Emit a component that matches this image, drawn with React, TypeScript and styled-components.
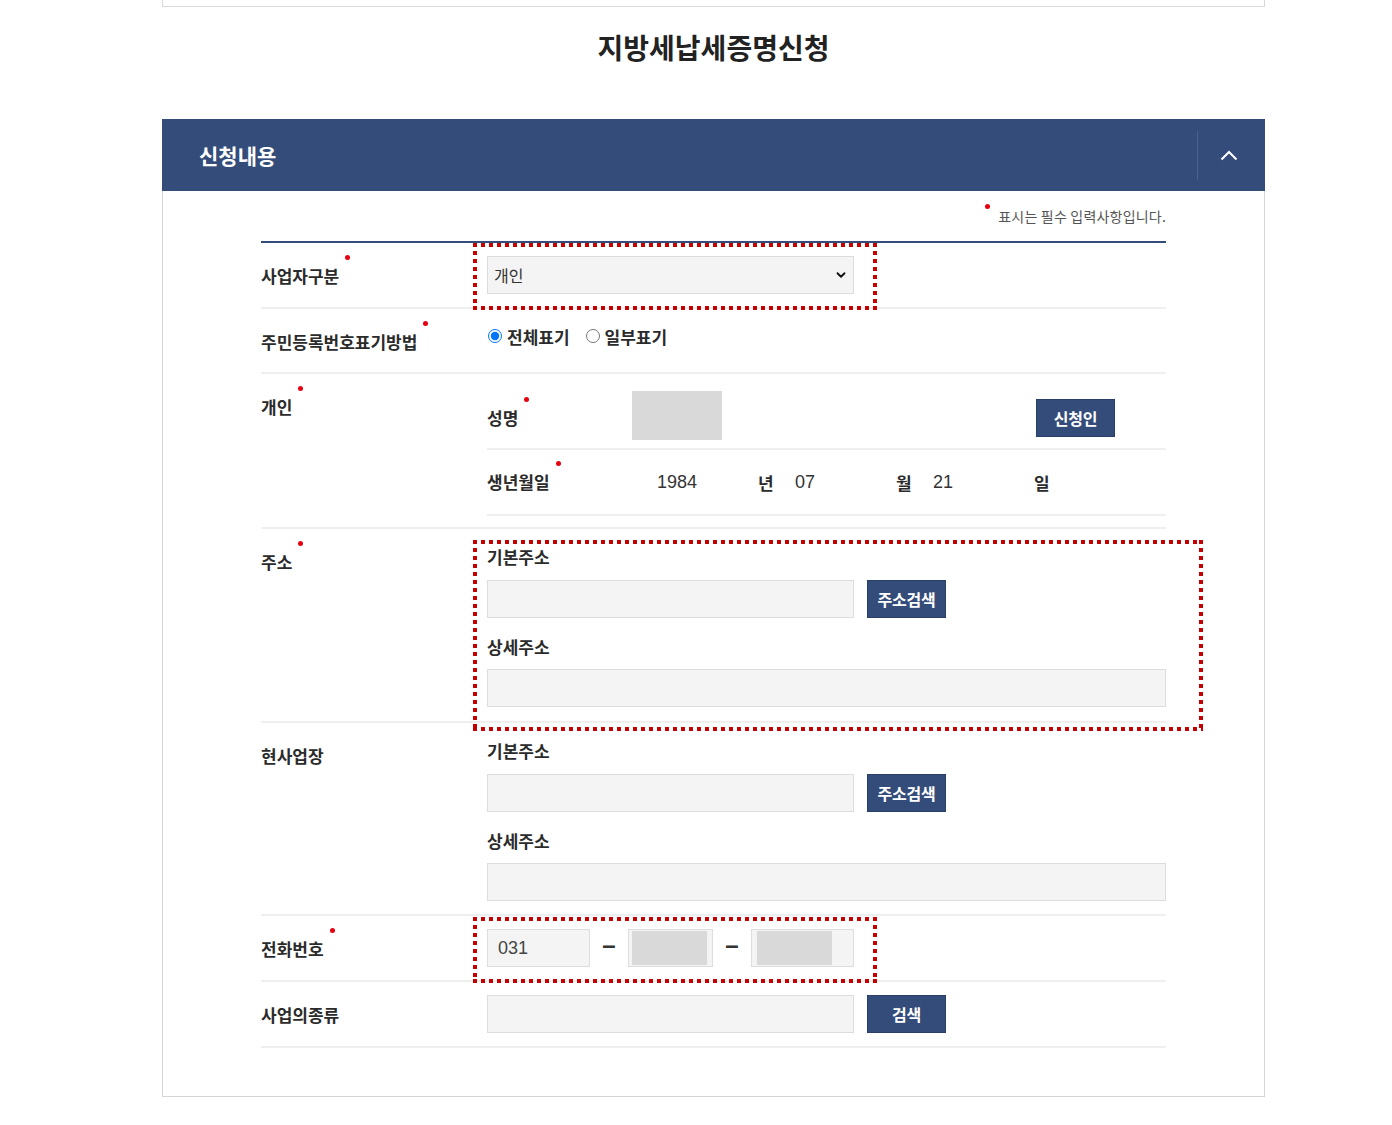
import React from 'react';
import styled, { createGlobalStyle } from 'styled-components';
import { ChevronDown } from 'lucide-react';

const GlobalStyle = createGlobalStyle`
  html, body {
    margin: 0;
    padding: 0;
    background: #fff;
  }
  body {
    font-family: "Noto Sans CJK KR", "Noto Sans", sans-serif;
    color: #2b2b2b;
  }
  * {
    box-sizing: border-box;
  }
`;

const NAVY = '#344c79';

const Page = styled.div`
  width: 1103px;
  margin-left: 162px;
`;

const TopCardEdge = styled.div`
  height: 7px;
  border: 1px solid #d9d9d9;
  border-top: none;
`;

const PageTitle = styled.h1`
  margin: 22px 0 54px;
  text-align: center;
  font-size: 28px;
  font-weight: 700;
  letter-spacing: 0;
  line-height: 36px;
  color: #222;
`;

const PanelHeader = styled.div`
  height: 72px;
  background: ${NAVY};
  display: flex;
  align-items: center;
`;

const PanelTitle = styled.h2`
  flex: 1;
  margin: 0;
  padding-left: 37px;
  font-size: 21px;
  font-weight: 700;
  letter-spacing: 0;
  color: #fff;
`;

const ToggleButton = styled.button`
  width: 68px;
  height: 49px;
  border: none;
  border-left: 1px solid #4b6090;
  background: transparent;
  display: flex;
  align-items: center;
  justify-content: center;
  padding: 0 6px 0 0;
  cursor: pointer;
`;

const PanelBody = styled.div`
  border: 1px solid #d5d5d5;
  border-top: none;
  padding: 15px 98px 48px;
`;

const Note = styled.p`
  margin: 0 0 15px;
  display: flex;
  justify-content: flex-end;
  align-items: flex-start;
  font-size: 14px;
  line-height: 20px;
  letter-spacing: 0.2px;
  color: #555;
`;

const NoteDot = styled.span`
  width: 5px;
  height: 5px;
  margin: -2px 8px 0 0;
  border-radius: 50%;
  background: #e60012;
`;

const FormTable = styled.div`
  border-top: 2px solid ${NAVY};
`;

const Row = styled.div`
  display: grid;
  grid-template-columns: 226px 1fr;
  border-bottom: 2px solid #efefef;
`;

const LabelCell = styled.div<{ $bottom?: number }>`
  padding: 14px 0 ${({ $bottom }) => $bottom ?? 12}px;
`;

const Label = styled.span`
  display: inline-flex;
  align-items: flex-start;
  font-size: 17px;
  font-weight: 700;
  letter-spacing: 0;
  line-height: 38px;
  color: #2b2b2b;
`;

const RequiredDot = styled.span`
  width: 5px;
  height: 5px;
  margin: -2px 0 0 6px;
  border-radius: 50%;
  background: #e60012;
`;

const ValueCell = styled.div<{ $pad: string }>`
  position: relative;
  padding: ${({ $pad }) => $pad};
`;

const Annotated = styled.div<{ $width: number }>`
  position: relative;
  width: ${({ $width }) => $width}px;
`;

// red dotted marking laid over the screenshot
const RedMark = styled.div<{ $t: number; $l: number; $r: number; $b: number }>`
  position: absolute;
  top: ${({ $t }) => $t}px;
  left: ${({ $l }) => $l}px;
  right: ${({ $r }) => $r}px;
  bottom: ${({ $b }) => $b}px;
  pointer-events: none;
  background:
    repeating-linear-gradient(90deg, #c40000 0 4px, transparent 4px 8px) top left / 100% 4px no-repeat,
    repeating-linear-gradient(90deg, #c40000 0 4px, transparent 4px 8px) bottom left / 100% 4px no-repeat,
    repeating-linear-gradient(180deg, #c40000 0 4px, transparent 4px 8px) top left / 4px 100% no-repeat,
    repeating-linear-gradient(180deg, #c40000 0 4px, transparent 4px 8px) top right / 4px 100% no-repeat;
`;

const Select = styled.select`
  width: 100%;
  height: 38px;
  appearance: none;
  background: #f4f4f4;
  border: 1px solid #dcdcdc;
  border-radius: 0;
  padding: 0 30px 0 6px;
  font-family: "Noto Sans CJK KR", sans-serif;
  font-size: 16px;
  color: #333;
  outline: none;
`;

const SelectIcon = styled.span`
  position: absolute;
  right: 6px;
  top: 12px;
  display: flex;
  pointer-events: none;
  color: #111;
`;

const RadioGroup = styled.div`
  display: flex;
  align-items: center;
  gap: 15px;
  height: 26px;
`;

const RadioLabel = styled.label`
  display: flex;
  align-items: center;
  gap: 5px;
  font-size: 17px;
  font-weight: 700;
  letter-spacing: 0;
  color: #2b2b2b;

  input {
    margin: 0 0 0 1px;
    width: 14px;
    height: 14px;
  }
`;

const SubRow = styled.div<{ $pad: string }>`
  display: flex;
  align-items: center;
  padding: ${({ $pad }) => $pad};
  border-bottom: 2px solid #efefef;
`;

const SubLabel = styled(Label)<{ $shift?: number }>`
  width: 145px;
  margin-top: ${({ $shift }) => $shift ?? 0}px;
`;

const NameMask = styled.div`
  width: 90px;
  height: 49px;
  background: #d9d9d9;
`;

const Spacer = styled.div`
  flex: 1;
`;

const Button = styled.button<{ $gap?: number; $shift?: number }>`
  width: 79px;
  height: 38px;
  margin: ${({ $shift }) => $shift ?? 0}px ${({ $gap }) => $gap ?? 0}px 0 0;
  background: ${NAVY};
  border: 1px solid #2a3f68;
  color: #fff;
  font-family: "Noto Sans CJK KR", sans-serif;
  font-size: 16px;
  font-weight: 700;
  letter-spacing: -0.2px;
  cursor: pointer;
`;

const DateLine = styled.div`
  display: flex;
  align-items: center;
  padding-left: 25px;
`;

const DateValue = styled.span`
  width: 101px;
  font-family: "Liberation Sans", Arial, sans-serif;
  font-size: 18px;
  color: #333;
`;

const DateUnit = styled.span`
  width: 37px;
  font-size: 17px;
  font-weight: 700;
  color: #2b2b2b;
`;

const AddressBlock = styled.div`
  display: flex;
  flex-direction: column;
`;

const FieldTitle = styled.div<{ $top?: number; $bottom: number }>`
  margin: ${({ $top }) => $top ?? 0}px 0 ${({ $bottom }) => $bottom}px;
  font-size: 17px;
  font-weight: 700;
  letter-spacing: 0;
  line-height: 22px;
  color: #2b2b2b;
`;

const InputLine = styled.div`
  display: flex;
  gap: 13px;
`;

const TextInput = styled.input<{ $width: number }>`
  width: ${({ $width }) => $width}px;
  height: 38px;
  background: #f4f4f4;
  border: 1px solid #dddddd;
  border-radius: 0;
  padding: 0 10px;
  font-size: 16px;
  outline: none;
`;

const PhoneGroup = styled.div`
  display: flex;
  align-items: center;
`;

const PhoneBox = styled.div<{ $width: number; $text?: boolean }>`
  width: ${({ $width }) => $width}px;
  height: 38px;
  background: #f4f4f4;
  border: 1px solid #dddddd;
  display: flex;
  align-items: center;
  padding-left: ${({ $text }) => ($text ? 10 : 0)}px;
  font-family: "Liberation Sans", Arial, sans-serif;
  font-size: 18px;
  color: #444;
`;

const Redact = styled.div<{ $left: number }>`
  width: 75px;
  height: 34px;
  margin-left: ${({ $left }) => $left}px;
  background: #d9d9d9;
`;

const Dash = styled.span`
  width: 38px;
  text-align: center;
  font-family: "Liberation Sans", Arial, sans-serif;
  font-size: 24px;
  font-weight: 700;
  line-height: 1;
  margin-top: -6px;
  color: #333;
`;

const ChevronUp = () => (
  <svg width="18" height="11" viewBox="0 0 18 11" fill="none">
    <polyline points="1.5,9.5 9,2 16.5,9.5" stroke="#fff" strokeWidth="2" />
  </svg>
);

const Address: React.FC = () => (
  <AddressBlock>
    <FieldTitle $bottom={12}>기본주소</FieldTitle>
    <InputLine>
      <TextInput $width={367} />
      <Button>주소검색</Button>
    </InputLine>
    <FieldTitle $top={18} $bottom={11}>상세주소</FieldTitle>
    <TextInput $width={679} />
  </AddressBlock>
);

export default function App() {
  return (
    <>
      <GlobalStyle />
      <Page>
        <TopCardEdge />
        <PageTitle>지방세납세증명신청</PageTitle>

        <section>
          <PanelHeader>
            <PanelTitle>신청내용</PanelTitle>
            <ToggleButton aria-label="접기">
              <ChevronUp />
            </ToggleButton>
          </PanelHeader>

          <PanelBody>
            <Note>
              <NoteDot />
              표시는 필수 입력사항입니다.
            </Note>

            <FormTable>
              <Row>
                <LabelCell>
                  <Label>사업자구분<RequiredDot /></Label>
                </LabelCell>
                <ValueCell $pad="13px 0 13px">
                  <Annotated $width={367}>
                    <Select defaultValue="개인">
                      <option>개인</option>
                      <option>법인</option>
                    </Select>
                    <SelectIcon>
                      <ChevronDown size={14} strokeWidth={3.2} />
                    </SelectIcon>
                    <RedMark $t={-13} $l={-14} $r={-23} $b={-16} />
                  </Annotated>
                </ValueCell>
              </Row>

              <Row>
                <LabelCell $bottom={11}>
                  <Label>주민등록번호표기방법<RequiredDot /></Label>
                </LabelCell>
                <ValueCell $pad="14px 0 0">
                  <RadioGroup>
                    <RadioLabel>
                      <input type="radio" name="rrn" defaultChecked />
                      전체표기
                    </RadioLabel>
                    <RadioLabel>
                      <input type="radio" name="rrn" />
                      일부표기
                    </RadioLabel>
                  </RadioGroup>
                </ValueCell>
              </Row>

              <Row>
                <LabelCell>
                  <Label>개인<RequiredDot /></Label>
                </LabelCell>
                <ValueCell $pad="0 0 11px">
                  <SubRow $pad="17px 0 8px">
                    <SubLabel $shift={5}>성명<RequiredDot /></SubLabel>
                    <NameMask />
                    <Spacer />
                    <Button $gap={51} $shift={5}>신청인</Button>
                  </SubRow>
                  <SubRow $pad="13px 0 13px">
                    <SubLabel>생년월일<RequiredDot /></SubLabel>
                    <DateLine>
                      <DateValue>1984</DateValue>
                      <DateUnit>년</DateUnit>
                      <DateValue>07</DateValue>
                      <DateUnit>월</DateUnit>
                      <DateValue>21</DateValue>
                      <DateUnit>일</DateUnit>
                    </DateLine>
                  </SubRow>
                </ValueCell>
              </Row>

              <Row>
                <LabelCell>
                  <Label>주소<RequiredDot /></Label>
                </LabelCell>
                <ValueCell $pad="17px 0 14px">
                  <Address />
                  <RedMark $t={11} $l={-14} $r={-37} $b={-10} />
                </ValueCell>
              </Row>

              <Row>
                <LabelCell>
                  <Label>현사업장</Label>
                </LabelCell>
                <ValueCell $pad="17px 0 13px">
                  <Address />
                </ValueCell>
              </Row>

              <Row>
                <LabelCell>
                  <Label>전화번호<RequiredDot /></Label>
                </LabelCell>
                <ValueCell $pad="13px 0 13px">
                  <Annotated $width={367}>
                    <PhoneGroup>
                      <PhoneBox $width={103} $text>031</PhoneBox>
                      <Dash>–</Dash>
                      <PhoneBox $width={85}>
                        <Redact $left={3} />
                      </PhoneBox>
                      <Dash>–</Dash>
                      <PhoneBox $width={103}>
                        <Redact $left={5} />
                      </PhoneBox>
                    </PhoneGroup>
                    <RedMark $t={-12} $l={-14} $r={-23} $b={-16} />
                  </Annotated>
                </ValueCell>
              </Row>

              <Row>
                <LabelCell>
                  <Label>사업의종류</Label>
                </LabelCell>
                <ValueCell $pad="13px 0 13px">
                  <InputLine>
                    <TextInput $width={367} />
                    <Button>검색</Button>
                  </InputLine>
                </ValueCell>
              </Row>
            </FormTable>
          </PanelBody>
        </section>
      </Page>
    </>
  );
}
